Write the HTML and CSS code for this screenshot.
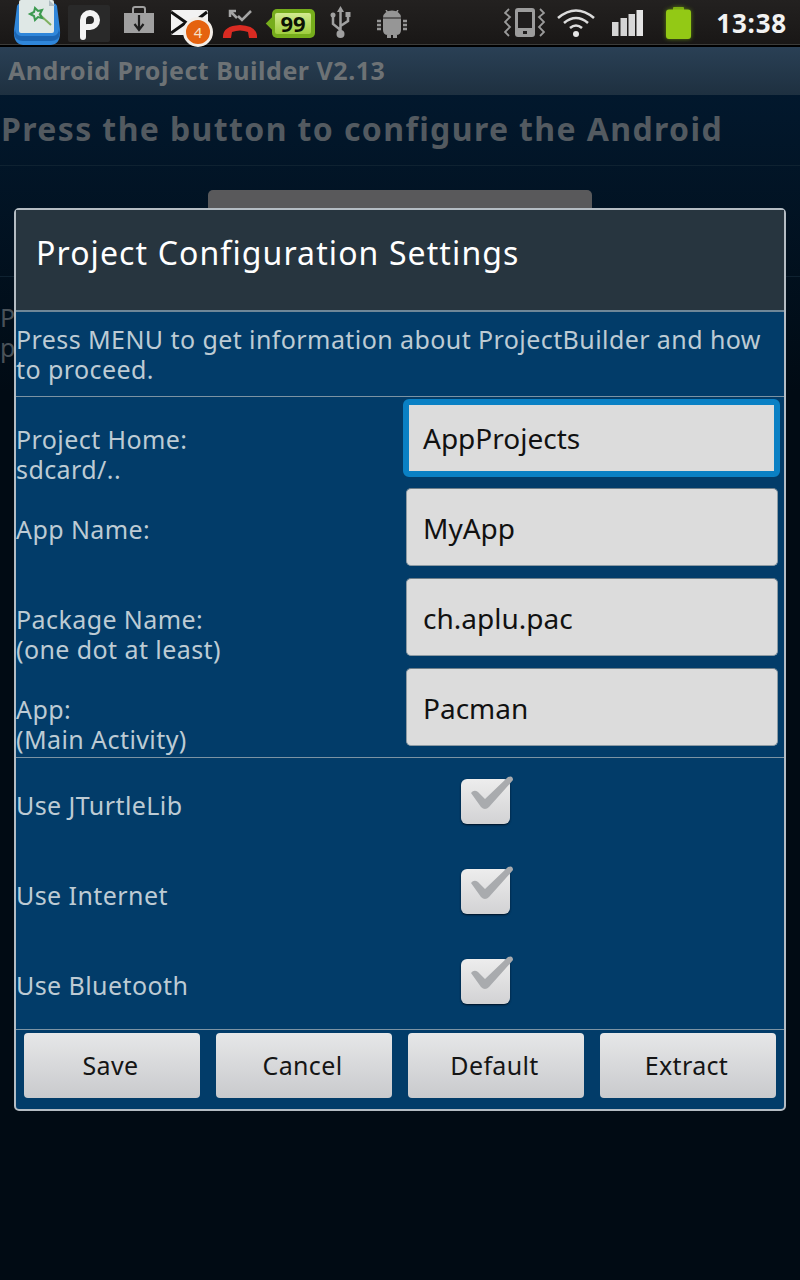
FILE: index.html
```html
<!DOCTYPE html>
<html lang="en">
<head>
<meta charset="utf-8">
<title>Android Project Builder</title>
<link rel="stylesheet" href="styles.css">
</head>
<body>
<div class="screen">
  <header class="statusbar">
    <div class="status-left">
      <svg class="ic ic-app" width="48" height="46" viewBox="0 0 48 46">
        <path d="M4 6 Q5 3 9 3 H39 Q43 3 44 6 L47 30 Q48 44 38 45 H10 Q0 44 1 30 Z" fill="#2f86da"/>
        <path d="M2 29 Q3 36 8 36 H40 Q45 36 46 29 L47 33 Q46 41 38 41 H10 Q2 41 1 33 Z" fill="#1c66b4"/>
        <rect x="6" y="0" width="35" height="33" rx="2" fill="#dfe8e6"/>
        <path d="M36 0 L42 6 H36 Z" fill="#aebcc2"/>
        <path d="M38 25 L26 14" stroke="#7fb060" stroke-width="2" fill="none"/>
        <path d="M22 8 L25 11 L29 10 L27 14 L29 18 L25 17 L22 20 L21 16 L17 14 L21 12 Z" fill="none" stroke="#3c9a50" stroke-width="2"/>
      </svg>
      <svg class="ic ic-p" width="42" height="37" viewBox="0 0 42 37">
        <rect width="42" height="37" rx="2" fill="#292929"/>
        <path d="M15 32 V15 A7 7 0 1 1 22 22 H19" fill="none" stroke="#f4f4f4" stroke-width="6" stroke-linecap="round"/>
      </svg>
      <svg class="ic ic-dl" width="30" height="28" viewBox="0 0 30 28">
        <path d="M9 8 V3 Q9 1 11 1 H19 Q21 1 21 3 V8" fill="none" stroke="#a0a0a0" stroke-width="2"/>
        <rect y="7" width="30" height="20" fill="#a0a0a0"/>
        <path d="M15 9 V23 M10.500 18 L15 24 L19.500 18" fill="none" stroke="#1f1f1f" stroke-width="2.200"/>
      </svg>
      <div class="mail-wrap">
        <svg class="ic" width="37" height="25" viewBox="0 0 37 25">
          <rect width="37" height="25" rx="2" fill="#f2f2f2"/>
          <path d="M0 2 L15 12.500 L0 23" fill="none" stroke="#111" stroke-width="3"/>
          <path d="M36 2 L27 9" fill="none" stroke="#111" stroke-width="3"/>
        </svg>
        <span class="mail-badge">4</span>
      </div>
      <svg class="ic ic-call" width="36" height="32" viewBox="0 0 36 32">
        <path d="M15 10 L9 4 M8 9 V3 H14 M16 8 L20 12 L29 3" fill="none" stroke="#a4a4a4" stroke-width="2.500"/>
        <path d="M1 30 Q0 18 18 17 Q36 18 35 30 L27 30 L26 24 Q18 21 10 24 L9 30 Z" fill="#d92b22"/>
      </svg>
      <div class="bubble"><span>99</span></div>
      <svg class="ic ic-usb" width="22" height="32" viewBox="0 0 22 32">
        <path d="M10.500 3 V27 M10.500 24 L3 18 V11 M10.500 20 L18 15 V10" fill="none" stroke="#a0a0a0" stroke-width="2.500"/>
        <path d="M10.500 0 L14 6 H7 Z" fill="#a0a0a0"/><circle cx="3" cy="9" r="2.500" fill="#a0a0a0"/><rect x="15.500" y="6" width="5" height="5" fill="#a0a0a0"/><circle cx="10.500" cy="28" r="4" fill="#a0a0a0"/>
      </svg>
      <svg class="ic ic-bot" width="30" height="28" viewBox="0 0 30 28">
        <path d="M6 7.500 A9 7 0 0 1 24 7.500 Z" fill="#969696"/>
        <path d="M9 0 L11 3 M21 0 L19 3" stroke="#969696" stroke-width="1.500"/>
        <path d="M6 8.500 H24 V20 Q24 25 19 25 H11 Q6 25 6 20 Z" fill="#969696"/>
        <path d="M0 11 H4 M0 15 H4 M0 19 H4 M26 11 H30 M26 15 H30 M26 19 H30" stroke="#969696" stroke-width="2.500"/>
        <rect x="10" y="25" width="4" height="3" fill="#969696"/><rect x="16" y="25" width="4" height="3" fill="#969696"/>
      </svg>
    </div>
    <div class="status-right">
      <svg class="ic ic-vib" width="41" height="29" viewBox="0 0 41 29">
        <path d="M5 1 L1 5 L6 9 L1 14 L6 19 L1 24 L5 28 M36 1 L40 5 L35 9 L40 14 L35 19 L40 24 L36 28" fill="none" stroke="#9a9a9a" stroke-width="1.800"/>
        <rect x="11" y="0" width="20" height="29" rx="3" fill="#9c9c9c"/>
        <rect x="14" y="4" width="14" height="16" fill="#1f1d1d"/>
        <rect x="19" y="23" width="4" height="3" fill="#1f1d1d"/>
      </svg>
      <svg class="ic ic-wifi" width="38" height="28" viewBox="0 0 38 28">
        <path d="M1 9 Q19 -6 37 9 M7 14 Q19 4 31 14 M13 19 Q19 14 25 19" fill="none" stroke="#dcdcdc" stroke-width="2.600"/>
        <circle cx="19" cy="25" r="3" fill="#e6e6e6"/>
      </svg>
      <svg class="ic ic-sig" width="31" height="26" viewBox="0 0 31 26">
        <rect x="0" y="12" width="6.500" height="14" fill="#d4d4d4"/><rect x="8.500" y="8" width="6.500" height="18" fill="#d4d4d4"/><rect x="16.500" y="4" width="6.500" height="22" fill="#d8d8d8"/><rect x="24.500" y="0" width="6.500" height="26" fill="#e4e4e4"/>
      </svg>
      <svg class="ic ic-batt" width="25" height="32" viewBox="0 0 25 32">
        <rect x="7" y="0" width="11" height="4" rx="1" fill="#7fb012"/>
        <rect x="0" y="2.500" width="25" height="29.500" rx="3" fill="#93c915"/>
      </svg>
      <time class="clock">13:38</time>
    </div>
  </header>
  <div class="titlebar">Android Project Builder V2.13</div>
  <main class="backdrop">
    <p class="lead">Press the button to configure the Android</p>
    <div class="rule"></div>
    <div class="back-btn-row"><div class="back-btn"></div></div>
    <div class="rule"></div>
    <p class="back-note">P<br>p</p>
  </main>

  <section class="dialog">
    <h1 class="dialog-title">Project Configuration Settings</h1>
    <p class="intro">Press MENU to get information about ProjectBuilder and how to proceed.</p>
    <div class="fields">
      <div class="field-row">
        <label class="field-label">Project Home:<br>sdcard/..</label>
        <div class="field field-focus">AppProjects</div>
      </div>
      <div class="field-row">
        <label class="field-label">App Name:</label>
        <div class="field">MyApp</div>
      </div>
      <div class="field-row">
        <label class="field-label">Package Name:<br>(one dot at least)</label>
        <div class="field">ch.aplu.pac</div>
      </div>
      <div class="field-row">
        <label class="field-label">App:<br>(Main Activity)</label>
        <div class="field">Pacman</div>
      </div>
    </div>
    <div class="checks">
      <div class="check-row"><span class="check-label">Use JTurtleLib</span><span class="checkbox"><svg width="56" height="50" viewBox="0 0 56 50"><path d="M10 18 Q13 14 17 17 L24 24 L47 2 Q52 0 52 5 L28 32 Q24 36 20 32 Z" fill="#a9abae"/></svg></span></div>
      <div class="check-row"><span class="check-label">Use Internet</span><span class="checkbox"><svg width="56" height="50" viewBox="0 0 56 50"><path d="M10 18 Q13 14 17 17 L24 24 L47 2 Q52 0 52 5 L28 32 Q24 36 20 32 Z" fill="#a9abae"/></svg></span></div>
      <div class="check-row"><span class="check-label">Use Bluetooth</span><span class="checkbox"><svg width="56" height="50" viewBox="0 0 56 50"><path d="M10 18 Q13 14 17 17 L24 24 L47 2 Q52 0 52 5 L28 32 Q24 36 20 32 Z" fill="#a9abae"/></svg></span></div>
    </div>
    <div class="actions">
      <button class="btn">Save</button>
      <button class="btn">Cancel</button>
      <button class="btn">Default</button>
      <button class="btn">Extract</button>
    </div>
  </section>
</div>
</body>
</html>
```
FILE: styles.css
```css
* { box-sizing: border-box; }
html, body { margin: 0; padding: 0; }
body { width: 800px; height: 1280px; overflow: hidden; background: #010b14; font-family: "Noto Sans", "Open Sans", sans-serif; }
.screen { position: relative; width: 800px; height: 1280px; display: flex; flex-direction: column; background: #010a12; }

.statusbar { height: 47px; flex: none; display: flex; justify-content: space-between; background: linear-gradient(#232120, #191716); border-bottom: 2px solid #000; box-shadow: inset 0 -1px 0 #3c3c3a; }
.status-left { position: relative; width: 420px; }
.status-left .ic, .mail-wrap, .bubble { position: absolute; }
.ic-app { left: 13px; top: 0; }
.ic-p { left: 68px; top: 5px; }
.ic-dl { left: 124px; top: 6px; }
.mail-wrap { left: 171px; top: 10px; width: 44px; height: 36px; }
.mail-wrap .ic { left: 0; top: 0; }
.mail-badge { position: absolute; left: 12px; top: 7px; width: 30px; height: 30px; border-radius: 50%; background: #e5620f; border: 3px solid #f3eee8; color: #f5e0c8; font-size: 15px; line-height: 24px; text-align: center; }
.ic-call { left: 222px; top: 8px; }
.bubble { left: 272px; top: 9px; width: 43px; height: 29px; background: #76ad1c; border-radius: 5px; padding: 4px 4px 4px 3px; }
.bubble::before { content: ""; position: absolute; left: -4px; top: 9px; width: 11px; height: 11px; background: #76ad1c; transform: rotate(45deg); }
.bubble span { position: relative; display: block; height: 21px; background: linear-gradient(#d2ea90, #9fce3e); border-radius: 2px; color: #0c1204; font-size: 22px; line-height: 21px; font-weight: 700; text-align: center; }
.ic-usb { left: 330px; top: 6px; }
.ic-bot { left: 377px; top: 10px; }
.status-right { display: flex; align-items: center; padding-right: 13px; }
.status-right .ic { flex: none; }
.ic-vib { margin-right: 12px; }
.ic-wifi { margin-right: 17px; }
.ic-sig { margin-right: 23px; }
.ic-batt { margin-right: 25px; filter: drop-shadow(0 0 2px #5c8010); }
.clock { color: #f2f2f2; font-size: 26px; font-weight: 700; letter-spacing: 0.8px; }

.titlebar { height: 48px; flex: none; padding-left: 8px; background: linear-gradient(#2a4055, #1e3040); color: #6d7275; font-size: 25px; line-height: 46px; font-weight: 700; letter-spacing: 0.52px; }

.backdrop { flex: 1; background: linear-gradient(#02182d, #010b14 25%); }
.lead { margin: 0; padding-left: 1px; height: 70px; color: #535a60; font-size: 32px; line-height: 68px; font-weight: 700; white-space: nowrap; letter-spacing: 1.38px; }
.rule { height: 1px; background: #0f2231; }
.back-btn-row { height: 110px; padding-top: 24px; display: flex; justify-content: center; }
.back-btn { width: 384px; height: 60px; border-radius: 5px; background: #59595b; }
.back-note { margin: 0; padding: 25px 0 0 0; color: #4a5259; font-size: 25px; line-height: 30px; }

.dialog { position: absolute; left: 14px; top: 208px; width: 772px; height: 903px; display: flex; flex-direction: column; border: 2px solid #b4bcc3; border-radius: 5px; background: #023c69; }
.dialog-title { flex: none; height: 102px; margin: 0; padding-left: 20px; background: #27353f; border-bottom: 2px solid #6f8798; color: #fff; font-size: 32px; line-height: 86px; font-weight: 400; white-space: nowrap; letter-spacing: 1.1px; }
.intro { flex: none; height: 85px; margin: 0; padding: 12px 16px 0 0; border-bottom: 1px solid #7c93a3; color: #bdcbd4; font-size: 25px; line-height: 30px; letter-spacing: 0.42px; }

.fields { flex: none; height: 361px; padding-top: 2px; border-bottom: 1px solid #7c93a3; }
.field-row { height: 90px; display: flex; justify-content: space-between; padding-right: 6px; }
.field-label { padding: 25px 0 0 0; color: #bdcbd4; font-size: 25px; line-height: 30px; letter-spacing: 0.42px; }
.field { width: 372px; height: 78px; margin-top: -1px; padding-left: 16px; border: 1px solid #8c9aa3; border-top-color: #6f7f8a; border-radius: 5px; background: #dcdcdc; color: #111; font-size: 28px; line-height: 78px; }
.field-focus { width: 377px; height: 78px; margin-top: 0; margin-right: -2px; padding-left: 14px; border: 6px solid #0a80c4; border-radius: 6px; line-height: 66px; }

.checks { flex: none; height: 272px; border-bottom: 1px solid #7c93a3; }
.check-row { height: 90px; display: flex; align-items: center; }
.check-label { width: 445px; margin-top: 4px; color: #bdcbd4; font-size: 25px; line-height: 30px; letter-spacing: 0.42px; }
.checkbox { position: relative; width: 49px; height: 45px; margin-top: -4px; border-radius: 6px; background: linear-gradient(#ededed, #d2d2d4); box-shadow: 0 1px 2px #012; }
.checkbox svg { position: absolute; left: 0; top: -4px; }

.actions { flex: 1; display: flex; gap: 16px; padding: 3px 8px 0; }
.btn { width: 176px; height: 65px; border: 0; border-radius: 4px; background: linear-gradient(#e6e7e8, #c9cacd); color: #151515; font-family: inherit; font-size: 25px; letter-spacing: 0.34px; padding: 0 3px 2px 0; }
```
